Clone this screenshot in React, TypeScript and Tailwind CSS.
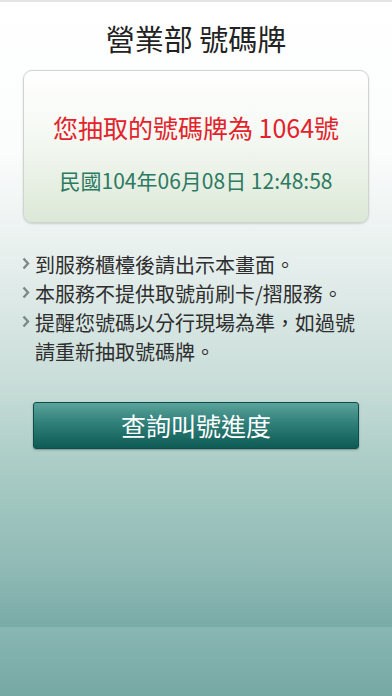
import { ReactNode } from "react"

const font = { fontFamily: '"Noto Sans CJK TC", "Noto Sans", sans-serif' }

function Bullet({ children }: { children: ReactNode }) {
  return (
    <li className="flex items-start">
      <span className="w-[13px] shrink-0 pt-[7px] text-[#7f8787]">
        <svg width="8" height="13" viewBox="0 0 8 13">
          <path d="M1.5 1.5 L6 6.5 L1.5 11.5" fill="none" stroke="currentColor" strokeWidth="2.4" />
        </svg>
      </span>
      <span>{children}</span>
    </li>
  )
}

export default function App() {
  return (
    <div className="flex min-h-[696px] w-full flex-col" style={font}>
      {/* main area */}
      <div className="flex h-[627px] flex-col border-t-2 border-[#e4e4e4] bg-[linear-gradient(to_bottom,#ffffff_0px,#fbfcfc_150px,#e8f0ee_250px,#c9ddd9_380px,#a8cbc4_470px,#92bbb7_560px,#79aba6_625px)]">
        <h1 className="mt-[16px] text-center text-[29px] leading-[40px] text-[#222]">營業部 號碼牌</h1>

        {/* ticket card */}
        <div className="mx-[23px] mt-[12px] flex h-[153px] flex-col items-center rounded-[9px] border border-[#cfd4cf] bg-[linear-gradient(to_bottom,#ffffff,#f4f8f2_45%,#dce8d7)] shadow-[0_1px_2px_rgba(0,0,0,0.15)]">
          <p className="mt-[39px] text-[25px] leading-[34px] text-[#e2232c]">您抽取的號碼牌為 1064號</p>
          <p className="mt-[22px] text-[21px] leading-[28px] text-[#2b7a62]">民國104年06月08日 12:48:58</p>
        </div>

        {/* notes */}
        <ul className="mt-[27px] ml-[22px] mr-[20px] text-[20px] leading-[29px] text-[#2e2e2e]">
          <Bullet>到服務櫃檯後請出示本畫面。</Bullet>
          <Bullet>本服務不提供取號前刷卡/摺服務。</Bullet>
          <Bullet>
            提醒您號碼以分行現場為準，如過號
            <br />
            請重新抽取號碼牌。
          </Bullet>
        </ul>

        <button className="mx-[33px] mt-[36px] h-[47px] rounded-[3px] border border-[#0d4e4a] bg-[linear-gradient(to_bottom,#5aa39c,#2f7f78_45%,#0f5b56)] text-[25px] text-white shadow-[0_1px_2px_rgba(0,0,0,0.3)]">
          查詢叫號進度
        </button>
      </div>

      {/* bottom band */}
      <div className="h-[69px] bg-[linear-gradient(to_bottom,#89b7b3,#76a8a3)]" />
    </div>
  )
}
